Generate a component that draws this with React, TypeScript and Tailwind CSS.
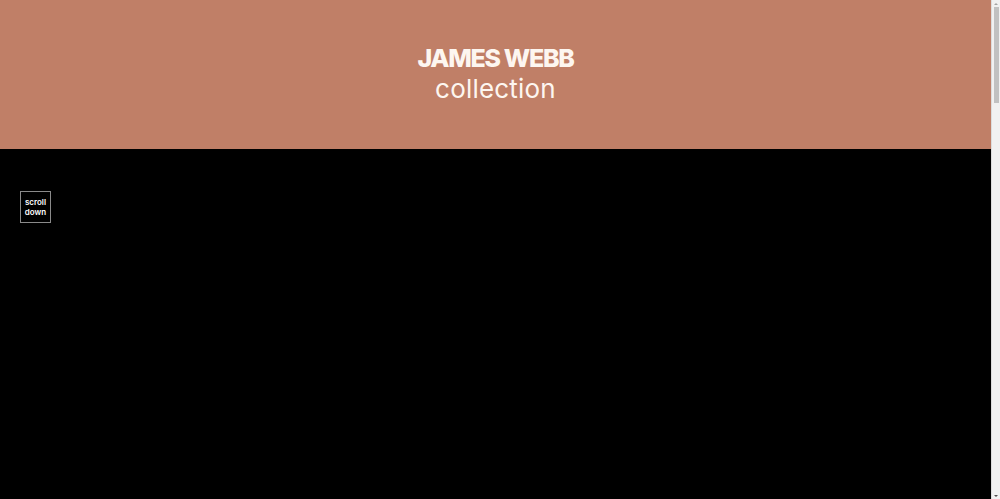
export default function App() {
  return (
    <div className="h-[499px] overflow-hidden flex bg-black" style={{ fontFamily: "Inter, 'Noto Sans', sans-serif" }}>
      <main className="flex-1 flex flex-col">
        <header className="h-[149px] shrink-0 bg-[#c07f67] flex flex-col items-center justify-center text-[#fdf6f0]">
          <h1 className="text-[25px] font-extrabold leading-[30px] tracking-[-1.3px] mt-[-2px]">JAMES WEBB</h1>
          <p className="text-[26px] font-normal leading-[32px] tracking-[0.2px]">collection</p>
        </header>
        <section className="flex-1 bg-black pt-[42px] pl-[20px]">
          <div className="w-[31px] h-[32px] border border-[#8a8a8a] flex items-center justify-center text-center text-white text-[8px] font-semibold leading-[10px]">
            scroll<br />down
          </div>
        </section>
      </main>
      <aside className="w-[9px] shrink-0 bg-[#f1f1f1] border-l border-[#dcdcdc] flex flex-col items-center">
        <div className="h-[7px] flex items-center justify-center">
          <div className="w-0 h-0 border-l-[2px] border-r-[2px] border-b-[2px] border-l-transparent border-r-transparent border-b-[#a3a3a3]" />
        </div>
        <div className="w-[5px] h-[96px] bg-[#c1c1c1]" />
        <div className="flex-1" />
        <div className="h-[7px] flex items-center justify-center">
          <div className="w-0 h-0 border-l-[2px] border-r-[2px] border-t-[2px] border-l-transparent border-r-transparent border-t-[#505050]" />
        </div>
      </aside>
    </div>
  );
}
